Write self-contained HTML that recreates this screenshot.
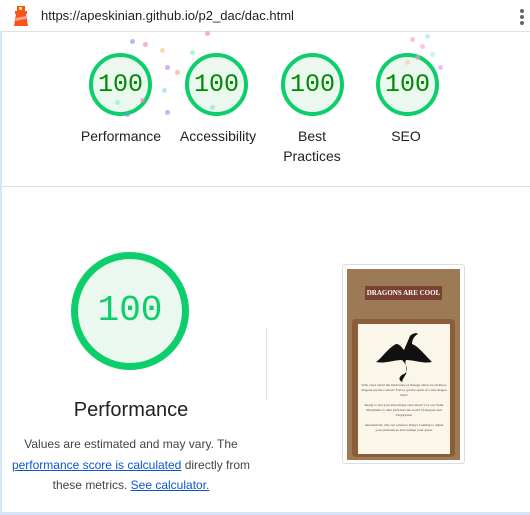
<!DOCTYPE html>
<html><head><meta charset="utf-8"><style>
*{margin:0;padding:0;box-sizing:border-box}
body{width:530px;height:515px;background:#fff;font-family:"Liberation Sans",sans-serif;position:relative;overflow:hidden}
.abs{position:absolute}
.bar{left:0;top:0;width:530px;height:32px;border-bottom:1px solid #e0e0e0;background:#fff}
.url{left:41px;top:8px;font-size:13px;color:#212121}
.g{position:absolute;border-radius:50%;border:4px solid #0cce6b;background:#eaf8ef;color:#080;font-family:"Liberation Mono",monospace;text-align:center}
.lbl{position:absolute;font-size:14px;color:#212121;text-align:center;width:100px;line-height:20px}
.dot{position:absolute;width:5px;height:5px;border-radius:50%;opacity:.6}
p.t{position:absolute;left:0;width:262px;text-align:center;font-size:12px;color:#444;line-height:20.5px;top:434px}
a{color:#0b57d0;text-decoration:underline}
</style></head><body>
<div class="abs" style="left:0;top:32px;width:2px;height:483px;background:#d4e4fb"></div>
<div class="abs" style="left:0;top:512px;width:530px;height:3px;background:#d4e4fb"></div>
<div class="abs bar"></div>
<svg class="abs" style="left:11px;top:4px" width="20" height="24" viewBox="0 0 20 24"><rect x="6" y="2" width="8" height="5" fill="#f5541f"/><rect x="8" y="3" width="3" height="3" fill="#fce34a"/><rect x="4" y="7" width="12" height="3" fill="#f5541f"/><polygon points="5,10 15,10 17,22 3,22" fill="#f5541f"/><polygon points="5,14 15,12 15,15 4,17" fill="#f9a085"/></svg>
<div class="abs url">https://apeskinian.github.io/p2_dac/dac.html</div>
<div class="abs" style="left:520px;top:9px;width:4px;height:4px;border-radius:50%;background:#666"></div>
<div class="abs" style="left:520px;top:15px;width:4px;height:4px;border-radius:50%;background:#666"></div>
<div class="abs" style="left:520px;top:21px;width:4px;height:4px;border-radius:50%;background:#666"></div>

<div class="g" style="left:89px;top:53px;width:63px;height:63px;font-size:25px;line-height:55px">100</div>
<div class="g" style="left:185px;top:53px;width:63px;height:63px;font-size:25px;line-height:55px">100</div>
<div class="g" style="left:281px;top:53px;width:63px;height:63px;font-size:25px;line-height:55px">100</div>
<div class="g" style="left:376px;top:53px;width:63px;height:63px;font-size:25px;line-height:55px">100</div>
<div class="lbl" style="left:71px;top:126px">Performance</div>
<div class="lbl" style="left:168px;top:126px">Accessibility</div>
<div class="lbl" style="left:262px;top:126px">Best<br>Practices</div>
<div class="lbl" style="left:356px;top:126px">SEO</div>
<div class="dot" style="left:130px;top:39px;background:#7a8cf5"></div>
<div class="dot" style="left:143px;top:42px;background:#f57ab0"></div>
<div class="dot" style="left:160px;top:48px;background:#f5c87a"></div>
<div class="dot" style="left:165px;top:65px;background:#b07af5"></div>
<div class="dot" style="left:175px;top:70px;background:#f5a07a"></div>
<div class="dot" style="left:190px;top:50px;background:#7af5a0"></div>
<div class="dot" style="left:162px;top:88px;background:#7adcf5"></div>
<div class="dot" style="left:165px;top:110px;background:#b07af5"></div>
<div class="dot" style="left:140px;top:98px;background:#f57ab0"></div>
<div class="dot" style="left:205px;top:31px;background:#f57ab0"></div>
<div class="dot" style="left:210px;top:105px;background:#7adcf5"></div>
<div class="dot" style="left:115px;top:100px;background:#7af5c8"></div>
<div class="dot" style="left:125px;top:112px;background:#7a8cf5"></div>
<div class="dot" style="left:410px;top:37px;background:#f5a0c8"></div>
<div class="dot" style="left:420px;top:44px;background:#f5a0c8"></div>
<div class="dot" style="left:430px;top:52px;background:#a0f5c8"></div>
<div class="dot" style="left:405px;top:60px;background:#f5c8a0"></div>
<div class="dot" style="left:438px;top:65px;background:#c8a0f5"></div>
<div class="dot" style="left:415px;top:55px;background:#f5a0c8"></div>
<div class="dot" style="left:425px;top:34px;background:#a0e0f5"></div>
<div class="abs" style="left:2px;top:186px;width:528px;height:1px;background:#e0e0e0"></div>

<div class="g" style="left:71px;top:252px;width:118px;height:118px;border-width:7px;color:#0cce6b;font-size:36px;line-height:104px">100</div>
<div class="abs" style="left:0;top:399px;width:262px;text-align:center;font-size:20px;color:#212121">Performance</div>
<p class="t">Values are estimated and may vary. The<br><a>performance score is calculated</a> directly from<br>these metrics. <a>See calculator.</a></p>
<div class="abs" style="left:266px;top:328px;width:1px;height:72px;background:#e0e0e0"></div>

<div class="abs" style="left:342px;top:264px;width:123px;height:200px;border:1px solid #ddd;border-radius:3px;background:#fff"></div>
<div class="abs" style="left:347px;top:269px;width:113px;height:191px;background:#9c7a55"></div>
<div class="abs" style="left:365px;top:286px;width:77px;height:14px;background:#7a4030;color:#fff;font-family:'Liberation Serif',serif;font-size:7px;text-align:center;line-height:14px;font-weight:bold">DRAGONS ARE COOL</div>
<div class="abs" style="left:352px;top:319px;width:103px;height:138px;background:#8a5e38;border-radius:4px"></div>
<div class="abs" style="left:358px;top:324px;width:92px;height:130px;background:#fbf6ea"></div>
<svg class="abs" style="left:372px;top:330px" width="64" height="55" viewBox="0 0 64 55"><path d="M32 52c-6 0-6-6 0-8 6-3 2-10-2-14-8 0-18 4-26 2 6-4 12-14 20-18 4 0 6 4 8 6l6-14c2-2 6-4 8-2-4 2-6 6-6 10 6 2 12 10 20 18-8 2-18-2-26-2-2 4 2 8 0 14-2 4-6 8-2 8z" fill="#111"/></svg>
<div class="abs" style="left:361px;top:383px;width:86px;font-size:3.5px;line-height:5px;color:#444;text-align:center;font-family:'Liberation Serif',serif">Who cares about the intricacies of lineage when we all know dragons are the coolest? You've got the spirit of a true dragon rider!<br><br>Ready to test your knowledge once more? Cry out 'Saint Morghulis' to dive back into the world of dragons and Targaryens!<br><br>Alternatively why not return to King's Landing to adjust your preferences and reshape your quest.</div>
</body></html>
